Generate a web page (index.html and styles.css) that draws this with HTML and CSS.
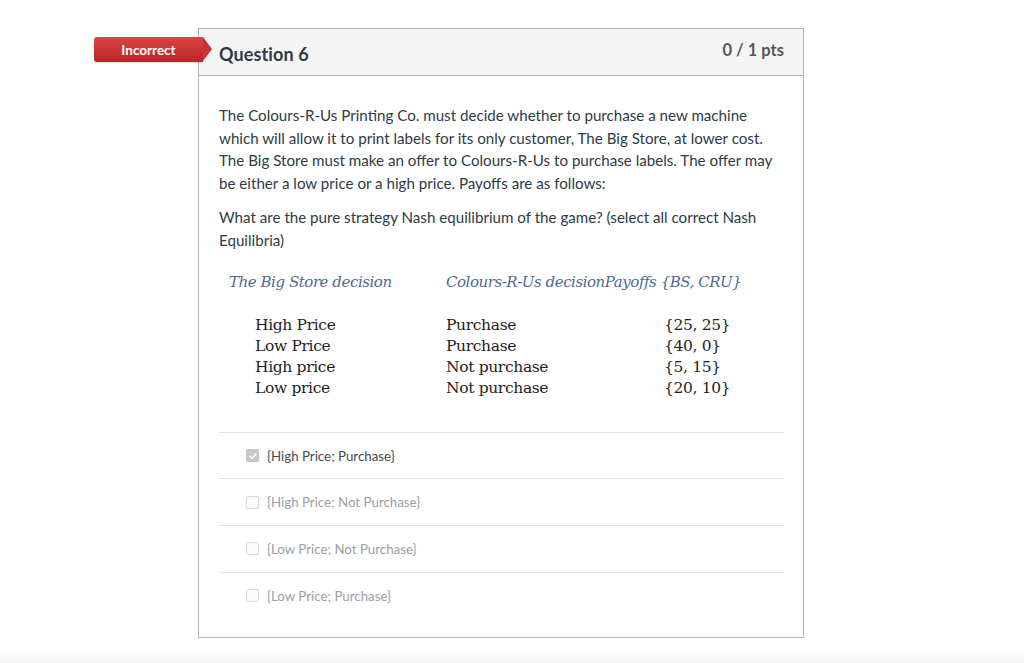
FILE: index.html
```html
<!DOCTYPE html>
<html>
<head>
<meta charset="utf-8">
<link rel="stylesheet" href="styles.css">
</head>
<body>
<div class="page">
  <div class="question-wrap">
    <div class="badge">Incorrect</div>
    <div class="card">
      <div class="card-header">
        <h2 class="q-title">Question 6</h2>
        <div class="pts">0 / 1 pts</div>
      </div>
      <div class="card-body">
        <p class="q-text">The Colours-R-Us Printing Co. must decide whether to purchase a new machine which will allow it to print labels for its only customer, The Big Store, at lower cost. The Big Store must make an offer to Colours-R-Us to purchase labels. The offer may be either a low price or a high price. Payoffs are as follows:</p>
        <p class="q-text">What are the pure strategy Nash equilibrium of the game? (select all correct Nash Equilibria)</p>
        <div class="payoff">
          <div class="payoff-head">
            <span class="h1">The Big Store decision</span>
            <span class="h2">Colours-R-Us decisionPayoffs {BS, CRU}</span>
          </div>
          <div class="payoff-rows">
            <div class="col c1"><span>High Price</span><span>Low Price</span><span>High price</span><span>Low price</span></div>
            <div class="col c2"><span>Purchase</span><span>Purchase</span><span>Not purchase</span><span>Not purchase</span></div>
            <div class="col c3"><span>{25, 25}</span><span>{40, 0}</span><span>{5, 15}</span><span>{20, 10}</span></div>
          </div>
        </div>
        <ul class="answers">
          <li class="answer selected"><span class="cb checked"><svg viewBox="0 0 12 12" width="10" height="10"><path d="M2.5 6.2 L5 8.6 L9.6 3.4" fill="none" stroke="#fff" stroke-width="1.8" stroke-linecap="round" stroke-linejoin="round"/></svg></span><span class="atext">{High Price; Purchase}</span></li>
          <li class="answer"><span class="cb"></span><span class="atext">{High Price; Not Purchase}</span></li>
          <li class="answer"><span class="cb"></span><span class="atext">{Low Price; Not Purchase}</span></li>
          <li class="answer"><span class="cb"></span><span class="atext">{Low Price; Purchase}</span></li>
        </ul>
      </div>
    </div>
  </div>
  <div class="bottom-band"></div>
</div>
</body>
</html>
```

FILE: styles.css
```css
html, body {
  margin: 0;
  padding: 0;
  background: #fff;
}
body {
  font-family: Lato, "Open Sans", sans-serif;
  color: #2d3b45;
  width: 1024px;
  height: 663px;
  overflow: hidden;
}
.page {
  display: flex;
  flex-direction: column;
  height: 663px;
}
.question-wrap {
  position: relative;
  margin: 28px 0 0 198px;
  width: 606px;
}
.badge {
  position: absolute;
  left: -104px;
  top: 9px;
  width: 109px;
  height: 25px;
  line-height: 25px;
  padding-top: 1px;
  box-sizing: border-box;
  background: linear-gradient(#dc4340, #b8262a);
  color: #fff;
  font-size: 13.5px;
  font-weight: 700;
  text-align: center;
  border-radius: 3px 0 0 3px;
  box-shadow: 0 1px 1px rgba(0,0,0,0.15);
}
.badge::after {
  content: "";
  position: absolute;
  right: -9px;
  top: 0;
  border-top: 12.5px solid transparent;
  border-bottom: 12.5px solid transparent;
  border-left: 9px solid #ca3334;
}
.card {
  border: 1px solid #b4b4b4;
  background: #fff;
  height: 610px;
  box-sizing: border-box;
}
.card-header {
  display: flex;
  justify-content: space-between;
  align-items: flex-start;
  background: #f5f5f5;
  border-bottom: 1px solid #b4b4b4;
  height: 47px;
  box-sizing: border-box;
  padding: 0 19px 0 20px;
}
.q-title {
  margin: 14px 0 0;
  font-size: 18px;
  font-weight: 700;
  color: #2d3b45;
  letter-spacing: 0.1px;
}
.pts {
  margin-top: 11px;
  font-size: 16.5px;
  font-weight: 700;
  color: #555;
}
.card-body {
  padding: 28px 19px 0 20px;
}
.q-text {
  margin: 0 0 12px;
  font-size: 15.15px;
  line-height: 22.6px;
  color: #2d3b45;
}
.payoff {
  font-family: "DejaVu Serif", "Liberation Serif", serif;
  padding: 9px 0 0 10px;
}
.payoff-head {
  display: flex;
  font-style: italic;
  color: #4e6b92;
  font-size: 15px;
  letter-spacing: -0.45px;
}
.payoff-head .h1 {
  width: 217px;
}
.payoff-rows {
  display: flex;
  padding: 24px 0 0 26px;
  color: #1e1e1e;
  font-size: 15.5px;
  letter-spacing: -0.35px;
}
.col {
  display: flex;
  flex-direction: column;
  line-height: 21.3px;
}
.c1 { width: 191px; }
.c2 { width: 218px; }
.answers {
  list-style: none;
  margin: 32px 0 0;
  padding: 0;
}
.answer {
  display: flex;
  align-items: center;
  height: 46.7px;
  border-top: 1px solid #e1e3e5;
  padding-left: 27px;
  box-sizing: border-box;
}
.cb {
  width: 11px;
  height: 11px;
  border: 1px solid #d7d9db;
  border-radius: 2px;
  background: #fbfbfb;
  margin-right: 8px;
  display: flex;
  align-items: center;
  justify-content: center;
}
.cb.checked {
  background: #c9c9c9;
  border-color: #c4c4c4;
}
.atext {
  font-size: 13.3px;
  color: #9aa0a4;
}
.answer.selected .atext {
  color: #444c52;
}
.bottom-band {
  margin-top: auto;
  height: 8px;
  background: linear-gradient(#fbfbfb, #f4f4f4);
}
```
